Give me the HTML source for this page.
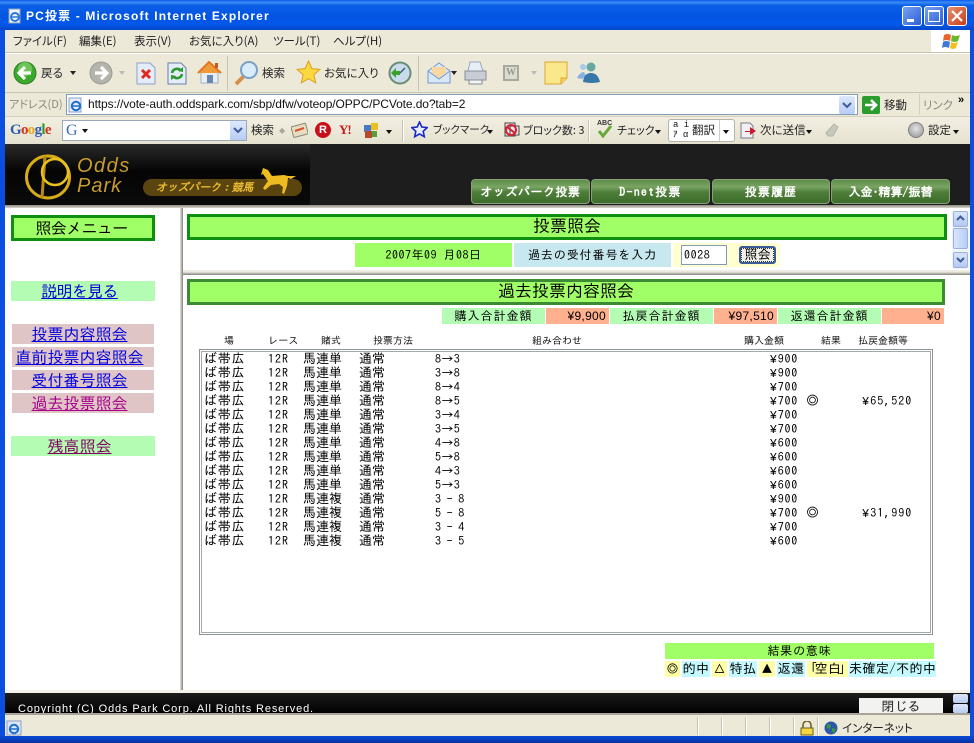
<!DOCTYPE html>
<html lang="ja"><head><meta charset="utf-8"><title>PC投票 - Microsoft Internet Explorer</title>
<style>
html,body{margin:0;padding:0;width:974px;height:743px;overflow:hidden;background:#fff}
body{position:relative;font-family:"Liberation Sans","IPAGothic",sans-serif;font-size:12px;color:#000}
.a{position:absolute;white-space:nowrap}
.t{position:absolute;white-space:nowrap;font-family:"IPAGothic","Noto Sans CJK JP",sans-serif;line-height:14px}
.u{position:absolute;white-space:nowrap;font-family:"Noto Sans CJK JP",sans-serif;font-feature-settings:"palt";font-size:11.5px;line-height:14px;color:#222}
.c{text-align:center}
.r{text-align:right}
i{font-style:normal;font-family:"Liberation Mono",monospace;line-height:0}
.bar{position:absolute;left:5px;width:965px}
.tab{position:absolute;top:179px;height:25px;border-radius:4px;border:1px solid #8aa078;box-sizing:border-box;background:linear-gradient(#5d8d4a 0,#7aa463 30%,#4f7f3a 52%,#3d6c2c 100%);color:#fff;font:bold 12px/25px "IPAGothic","Noto Sans CJK JP",sans-serif;text-align:center;white-space:nowrap}
.hb{position:absolute;box-sizing:border-box;background:#a0ff66;border:3px solid #0f8f0f;text-align:center;font-family:"IPAGothic","Noto Sans CJK JP",sans-serif;font-size:17px;line-height:20px}
.nav{position:absolute;box-sizing:border-box;height:20px;padding-right:7px;text-align:center;font-family:"IPAGothic","Noto Sans CJK JP",sans-serif;font-size:16px;line-height:20px;text-decoration:underline;white-space:nowrap}
.cell{position:absolute;top:308px;height:16px;font-family:"IPAGothic","Noto Sans CJK JP",sans-serif;font-size:12px;line-height:16px;letter-spacing:1px}
.gy{background:#b4fcb4;text-align:center}
.or{background:#ffb08f;text-align:right;padding-right:3px;box-sizing:border-box;letter-spacing:.3px;font-family:"Liberation Sans",sans-serif}
.lg{position:absolute;top:661px;height:16px;font-family:"IPAGothic","Noto Sans CJK JP",sans-serif;font-size:13px;line-height:16px;text-align:center;white-space:nowrap;letter-spacing:.4px}
.yl{background:#ffffa8}.bl{background:#c4faff}
.h{font-size:10px;top:334px;color:#111}
.sep{position:absolute;width:1px;background:#c8c4b0;border-right:1px solid #fff}
.col{position:absolute;top:352px;white-space:pre;font-family:"IPAGothic","Noto Sans CJK JP",sans-serif;line-height:14px;font-size:13px}
</style></head><body>

<!-- window frame -->
<div class="a" style="left:0;top:0;width:974px;height:743px;background:#0a4fe0"></div>
<div class="a" style="left:0;top:0;width:974px;height:30px;background:linear-gradient(#0a5ae8 0,#3b8cf6 8%,#0b5fe6 18%,#0354e2 55%,#0358ea 80%,#0446c8 100%)"></div>
<svg class="a" style="left:7px;top:8px" width="16" height="16" viewBox="0 0 16 16"><rect x="2" y="1" width="11" height="14" fill="#f2f4f8" stroke="#8aa0c0"/><circle cx="8" cy="9" r="4" fill="none" stroke="#2a78d8" stroke-width="2"/><path d="M4 9h8" stroke="#2a78d8" stroke-width="1.5"/></svg>
<div class="a" style="left:26px;top:9px;color:#fff;font:bold 12px/14px 'Liberation Sans','Noto Sans CJK JP',sans-serif;letter-spacing:1.15px">PC投票 - Microsoft Internet Explorer</div>
<div class="a" style="left:902px;top:6px;width:20px;height:20px;border:1px solid #fff;border-radius:3px;box-sizing:border-box;background:linear-gradient(135deg,#7aa2f0,#2a5fd8)"><div class="a" style="left:4px;top:12px;width:7px;height:3px;background:#fff"></div></div>
<div class="a" style="left:924px;top:6px;width:20px;height:20px;border:1px solid #fff;border-radius:3px;box-sizing:border-box;background:linear-gradient(135deg,#7aa2f0,#2a5fd8)"><div class="a" style="left:3px;top:3px;width:10px;height:9px;border:1px solid #fff;border-top-width:2px"></div></div>
<div class="a" style="left:947px;top:6px;width:20px;height:20px;border:1px solid #fff;border-radius:3px;box-sizing:border-box;background:linear-gradient(135deg,#e89070,#c83c18)"><svg width="18" height="18" style="position:absolute;left:0;top:0"><path d="M4 4l10 10M14 4L4 14" stroke="#fff" stroke-width="2.2"/></svg></div>

<!-- chrome bars -->
<div class="bar" style="top:30px;height:114px;background:#ede9d8"></div>
<div class="bar" style="top:52px;height:1px;background:#c8c4b0"></div>
<div class="bar" style="top:53px;height:1px;background:#fff"></div>
<div class="bar" style="top:92px;height:1px;background:#c8c4b0"></div>
<div class="bar" style="top:116px;height:1px;background:#d4d0bc"></div>
<div class="bar" style="top:117px;height:27px;background:linear-gradient(#f2efe2,#e6e2d0)"></div>
<div class="a" style="left:931px;top:30px;width:39px;height:22px;background:#fff"></div>
<svg class="a" style="left:942px;top:32px" width="19" height="18" viewBox="0 0 19 18"><path d="M2 3q3-2 7 0l-1 6q-4-2-7 0z" fill="#e8642c"/><path d="M10 3q4 2 8 0l-2 6q-3 2-7 0z" fill="#6cb82c"/><path d="M1 10q3-2 7 0l-1 6q-4-2-7 0z" fill="#3c78d8"/><path d="M9 10q3 2 7 0l-2 6q-3 2-6 0z" fill="#f4c020"/></svg>

<!-- menu -->
<div class="u" style="left:13px;top:34px">ファイル(F)</div>
<div class="u" style="left:79px;top:34px">編集(E)</div>
<div class="u" style="left:134px;top:34px">表示(V)</div>
<div class="u" style="left:189px;top:34px">お気に入り(A)</div>
<div class="u" style="left:273px;top:34px">ツール(T)</div>
<div class="u" style="left:333px;top:34px">ヘルプ(H)</div>

<!-- toolbar -->
<svg class="a" style="left:13px;top:61px" width="24" height="24" viewBox="0 0 24 24"><circle cx="12" cy="12" r="11" fill="#3ca82c" stroke="#2a8020"/><circle cx="12" cy="8" r="7" fill="#8ed878" opacity=".6"/><path d="M18 12H8M12 6l-6 6 6 6" stroke="#fff" stroke-width="3.2" fill="none"/></svg>
<div class="u" style="left:41px;top:66px">戻る</div>
<div class="a" style="left:70px;top:71px;width:0;height:0;border:3px solid transparent;border-top:4px solid #222"></div>
<svg class="a" style="left:89px;top:61px" width="24" height="24" viewBox="0 0 24 24"><circle cx="12" cy="12" r="11" fill="#b4b4ac" stroke="#9c9c94"/><path d="M6 12h10M12 6l6 6-6 6" stroke="#fff" stroke-width="3.2" fill="none"/></svg>
<div class="a" style="left:119px;top:71px;width:0;height:0;border:3px solid transparent;border-top:4px solid #bbb"></div>
<svg class="a" style="left:136px;top:62px" width="20" height="23" viewBox="0 0 20 23"><path d="M1 1h13l5 5v16H1z" fill="#e4ecfa" stroke="#8ca0c8"/><path d="M6 8l8 8M14 8l-8 8" stroke="#e0281c" stroke-width="3"/></svg>
<svg class="a" style="left:167px;top:62px" width="20" height="23" viewBox="0 0 20 23"><path d="M1 1h13l5 5v16H1z" fill="#e4ecfa" stroke="#6880a8"/><path d="M5 11a5 5 0 0 1 9-2M15 12a5 5 0 0 1-9 2" stroke="#2c9a2c" stroke-width="2.6" fill="none"/><path d="M11 9l5 1 0-5zM9 14l-5-1 0 5z" fill="#2c9a2c"/></svg>
<svg class="a" style="left:197px;top:60px" width="25" height="25" viewBox="0 0 25 25"><path d="M4 12v11h17V12z" fill="#e8eef6" stroke="#a0b0c8"/><path d="M1 13L12 2l12 11" fill="#f09a3c" stroke="#e07820" stroke-width="2"/><rect x="10" y="15" width="6" height="8" fill="#6c88b0"/><rect x="18" y="3" width="3" height="5" fill="#c05a20"/></svg>
<div class="a" style="left:227px;top:56px;width:1px;height:35px;background:#c8c4b0"></div>
<svg class="a" style="left:233px;top:60px" width="26" height="26" viewBox="0 0 26 26"><path d="M3 24l9-9" stroke="#d89048" stroke-width="4"/><circle cx="16" cy="10" r="8" fill="#d8ecfc" stroke="#7aa0c8" stroke-width="2"/></svg>
<div class="u" style="left:262px;top:66px">検索</div>
<svg class="a" style="left:296px;top:60px" width="25" height="25" viewBox="0 0 25 25"><path d="M12.5 1l3.4 7.6 8.1.8-6.1 5.4 1.8 8.1-7.2-4.2-7.2 4.2 1.8-8.1L1 9.4l8.1-.8z" fill="#fcd840" stroke="#d8a020"/></svg>
<div class="u" style="left:324px;top:66px">お気に入り</div>
<svg class="a" style="left:388px;top:61px" width="24" height="24" viewBox="0 0 24 24"><circle cx="12" cy="12" r="10.5" fill="#c8dcec" stroke="#688c78" stroke-width="2"/><path d="M12 12l5-5M12 12H7" stroke="#405878" stroke-width="1.5"/><path d="M3 12l5-5v3h4v4H8v3z" fill="#3ca02c"/></svg>
<div class="a" style="left:418px;top:56px;width:1px;height:35px;background:#c8c4b0"></div>
<svg class="a" style="left:427px;top:61px" width="24" height="24" viewBox="0 0 24 24"><path d="M1 10L12 2l11 8v12H1z" fill="#d8e8fa" stroke="#7898c8"/><path d="M5 12V6h14v6l-7 5z" fill="#f8d8a0"/><path d="M1 10l11 8 11-8" fill="none" stroke="#7898c8"/></svg>
<div class="a" style="left:451px;top:71px;width:0;height:0;border:3px solid transparent;border-top:4px solid #222"></div>
<svg class="a" style="left:463px;top:61px" width="25" height="24" viewBox="0 0 25 24"><path d="M7 1h10l3 9H5z" fill="#e8eef8" stroke="#98a8c0"/><path d="M2 10h21v9H2z" fill="#c8ccd4" stroke="#888c98"/><path d="M6 19h13v4H6z" fill="#f4f4f4" stroke="#888c98"/></svg>
<div class="a" style="left:503px;top:65px;width:16px;height:16px;box-sizing:border-box;border:2px solid #a8a89c;background:#dcdcd0;font:bold 10px/12px 'Liberation Serif',serif;text-align:center;color:#98988c">W</div>
<div class="a" style="left:531px;top:71px;width:0;height:0;border:3px solid transparent;border-top:4px solid #bbb"></div>
<svg class="a" style="left:544px;top:61px" width="24" height="24" viewBox="0 0 24 24"><path d="M1 1h22v16l-6 6H1z" fill="#fce88c" stroke="#d8a830"/><path d="M17 23v-6h6" fill="#f8d060" stroke="#d8a830"/></svg>
<svg class="a" style="left:576px;top:62px" width="25" height="22" viewBox="0 0 25 22"><circle cx="7" cy="5" r="3" fill="#a8c8ec"/><circle cx="15" cy="5" r="4.5" fill="#64a8a0"/><path d="M1 16q3-6 7-6l2 4-4 3z" fill="#88b0e0"/><path d="M7 20q1-9 8-9t9 9q-8 2-17 0z" fill="#3878a8"/></svg>

<!-- address -->
<div class="u" style="left:9px;top:97px;color:#8c8a80;font-size:11px">アドレス(D)</div>
<div class="a" style="left:66px;top:94px;width:792px;height:21px;background:#fff;border:1px solid #7f9db9;box-sizing:border-box"></div>
<svg class="a" style="left:68px;top:97px" width="16" height="16" viewBox="0 0 16 16"><rect x="1" y="1" width="12" height="14" fill="#e8eef8" stroke="#8ca0c8"/><circle cx="8" cy="9" r="4.2" fill="none" stroke="#1c70d0" stroke-width="2"/><path d="M4 9h8" stroke="#1c70d0" stroke-width="1.5"/></svg>
<div class="a" style="left:88px;top:97px;font:12px/15px 'Liberation Sans',sans-serif;color:#111;letter-spacing:-.1px">https://vote-auth.oddspark.com/sbp/dfw/voteop/OPPC/PCVote.do?tab=2</div>
<div class="a" style="left:839px;top:96px;width:16px;height:18px;background:linear-gradient(#dce8fc,#b8ccf4);border-radius:2px"><svg width="16" height="18"><path d="M4 7l4 4 4-4" stroke="#3c5c98" stroke-width="2" fill="none"/></svg></div>
<svg class="a" style="left:862px;top:96px" width="18" height="18" viewBox="0 0 18 18"><rect width="18" height="18" rx="2" fill="#2c9c2c"/><path d="M3 9h10M9 4l5 5-5 5" stroke="#fff" stroke-width="2.6" fill="none"/></svg>
<div class="u" style="left:884px;top:98px">移動</div>
<div class="a" style="left:919px;top:94px;width:1px;height:20px;background:#d4d0bc"></div>
<div class="u" style="left:923px;top:98px;color:#8c8a80">リンク</div>
<div class="a" style="left:958px;top:93px;font:bold 11px/14px 'Liberation Sans',sans-serif">»</div>

<!-- google toolbar -->
<div class="a" style="left:10px;top:120px;font:bold 15px/20px 'Liberation Serif',serif;letter-spacing:-.7px"><span style="color:#2c5cb8">G</span><span style="color:#d8301c">o</span><span style="color:#e8a818">o</span><span style="color:#2c5cb8">g</span><span style="color:#2c9a2c">l</span><span style="color:#d8301c">e</span></div>
<div class="a" style="left:62px;top:120px;width:185px;height:21px;background:#fff;border:1px solid #9aa8b8;box-sizing:border-box"></div>
<div class="a" style="left:66px;top:121px;font:16px/19px 'Liberation Serif',serif;color:#3c6cb8">G</div>
<div class="a" style="left:82px;top:129px;width:0;height:0;border:3px solid transparent;border-top:4px solid #111"></div>
<div class="a" style="left:230px;top:121px;width:16px;height:19px;background:linear-gradient(#dce8fc,#b8ccf4)"><svg width="16" height="19"><path d="M4 7l4 4 4-4" stroke="#3c5c98" stroke-width="2" fill="none"/></svg></div>
<div class="u" style="left:251px;top:123px">検索</div>
<div class="a" style="left:279px;top:126px;color:#a8a89c;font:8px/10px 'Liberation Sans',sans-serif">◆</div>
<svg class="a" style="left:291px;top:122px" width="17" height="17" viewBox="0 0 17 17"><rect x="1" y="3" width="15" height="11" rx="1" fill="#e8dcc0" stroke="#8c8878" transform="rotate(-15 8 8)"/><path d="M4 9l9-3" stroke="#d8502c" stroke-width="2"/></svg>
<div class="a" style="left:315px;top:122px;width:16px;height:16px;border-radius:50%;background:#c8101c;color:#fff;font:bold 11px/16px 'Liberation Sans',sans-serif;text-align:center">R</div>
<div class="a" style="left:339px;top:123px;font:bold 13px/14px 'Liberation Serif',serif;color:#c81818;letter-spacing:-1px">Y!</div>
<svg class="a" style="left:363px;top:122px" width="16" height="17" viewBox="0 0 16 17"><rect x="1" y="3" width="7" height="7" fill="#4878c8"/><rect x="8" y="1" width="7" height="7" fill="#e8c020"/><rect x="2" y="9" width="7" height="7" fill="#b84828"/><rect x="9" y="9" width="5" height="6" fill="#58a038"/></svg>
<div class="a" style="left:386px;top:130px;width:0;height:0;border:3px solid transparent;border-top:4px solid #111"></div>
<div class="sep" style="left:402px;top:120px;height:22px"></div>
<svg class="a" style="left:411px;top:121px" width="17" height="17" viewBox="0 0 17 17"><path d="M8.5 1l2.3 5 5.4.6-4 3.7 1.1 5.4-4.8-2.8-4.8 2.8 1.1-5.4-4-3.7 5.4-.6z" fill="#e8f0ff" stroke="#1c28c8" stroke-width="1.6"/></svg>
<div class="u" style="left:433px;top:123px;font-size:10.5px">ブックマーク</div>
<div class="a" style="left:487px;top:130px;width:0;height:0;border:3px solid transparent;border-top:4px solid #111"></div>
<svg class="a" style="left:504px;top:122px" width="16" height="16" viewBox="0 0 16 16"><rect x="1" y="1" width="10" height="13" fill="#e8e8f0" stroke="#444"/><rect x="6" y="4" width="9" height="9" fill="#e8e8f0" stroke="#444"/><circle cx="7" cy="8" r="5" fill="none" stroke="#d82030" stroke-width="2"/><path d="M3 5l8 6" stroke="#d82030" stroke-width="2"/></svg>
<div class="u" style="left:523px;top:123px;font-size:11px">ブロック数: 3</div>
<div class="sep" style="left:588px;top:120px;height:22px"></div>
<div class="a" style="left:597px;top:120px;font:bold 7px/8px 'Liberation Sans',sans-serif;color:#333">ABC</div>
<svg class="a" style="left:597px;top:124px" width="16" height="14" viewBox="0 0 16 14"><path d="M2 7l4 5 8-10" stroke="#68a838" stroke-width="3" fill="none"/></svg>
<div class="u" style="left:617px;top:123px;font-size:11px">チェック</div>
<div class="a" style="left:655px;top:130px;width:0;height:0;border:3px solid transparent;border-top:4px solid #111"></div>
<div class="a" style="left:668px;top:119px;width:67px;height:23px;background:#fff;border:1px solid #b4b4ac;border-radius:3px;box-sizing:border-box"></div>
<div class="a" style="left:719px;top:120px;width:1px;height:21px;background:#d0d0c8"></div>
<div class="a" style="left:673px;top:120px;font:9px/10px 'Liberation Mono','IPAGothic',monospace;width:18px;color:#111">a i<br>ｱ α</div>
<div class="u" style="left:692px;top:123px">翻訳</div>
<div class="a" style="left:723px;top:130px;width:0;height:0;border:3px solid transparent;border-top:4px solid #111"></div>
<svg class="a" style="left:740px;top:122px" width="18" height="17" viewBox="0 0 18 17"><path d="M1 1h9l3 3v12H1z" fill="#f0f0f4" stroke="#7c7c88"/><path d="M5 9h5V5l6 4-6 4v-3H5z" fill="#c8182c"/></svg>
<div class="u" style="left:760px;top:123px">次に送信</div>
<div class="a" style="left:806px;top:130px;width:0;height:0;border:3px solid transparent;border-top:4px solid #111"></div>
<svg class="a" style="left:824px;top:122px" width="16" height="16" viewBox="0 0 16 16"><path d="M2 11l8-9 4 3-5 9H4z" fill="#c8c8bc" stroke="#b4b4a8"/></svg>
<div class="a" style="left:908px;top:122px;width:16px;height:16px;border-radius:50%;background:radial-gradient(circle at 50% 40%,#e4e4e4,#909090);border:1px solid #808080;box-sizing:border-box"></div>
<div class="u" style="left:928px;top:123px">設定</div>
<div class="a" style="left:953px;top:130px;width:0;height:0;border:3px solid transparent;border-top:4px solid #111"></div>

<!-- page header -->
<div class="bar" style="top:144px;height:61px;background:#1d1d1d"></div>
<div class="a" style="left:5px;top:144px;width:305px;height:61px;background:linear-gradient(#2a2a2a,#050505 45%,#0a0a0a 100%)"></div>
<svg class="a" style="left:24px;top:153px" width="50" height="48" viewBox="0 0 50 48"><ellipse cx="24" cy="24" rx="21.5" ry="21" fill="none" stroke="#d8ac18" stroke-width="3"/><path d="M21 3l-3 42" stroke="#b88c10" stroke-width="3"/><ellipse cx="31" cy="19" rx="13" ry="13" fill="none" stroke="#e8c020" stroke-width="2.5"/></svg>
<div class="a" style="left:77px;top:155px;font:italic 20px/22px 'Liberation Sans',sans-serif;color:#c89c30;letter-spacing:1.5px">Odds</div>
<div class="a" style="left:77px;top:175px;font:italic 20px/22px 'Liberation Sans',sans-serif;color:#c89c30;letter-spacing:1px">Park</div>
<div class="a" style="left:143px;top:179px;width:159px;height:17px;border-radius:9px;background:#5a4510"></div>
<div class="t" style="left:156px;top:181px;font-size:11px;font-weight:bold;font-style:italic;color:#e8b830;letter-spacing:-.2px">オッズパーク：競馬</div>
<svg class="a" style="left:260px;top:166px" width="38" height="30" viewBox="0 0 38 30"><path d="M3 2l5 2 4 6 12-1 4 1 8 0-5 3-3-1-1 8-3 8-2-1 1-6-4-3-8 1-6 5-2-2 5-7-5-7-2 1z" fill="#eebc20"/></svg>

<div class="tab" style="left:471px;width:119px;letter-spacing:.5px">オッズパーク投票</div>
<div class="tab" style="left:591px;width:119px;letter-spacing:1.2px">D-net投票</div>
<div class="tab" style="left:712px;width:118px;letter-spacing:1px">投票履歴</div>
<div class="tab" style="left:831px;width:119px">入金･精算/振替</div>

<!-- frames -->
<div class="bar" style="top:205px;height:488px;background:#fff"></div>
<div class="bar" style="top:205px;height:3px;background:linear-gradient(#8c8c84,#d8d4c8)"></div>
<div class="a" style="left:180px;top:208px;width:3px;height:482px;background:linear-gradient(90deg,#e8e8e0,#808078)"></div>
<div class="a" style="left:183px;top:270px;width:787px;height:5px;background:linear-gradient(#f0efe8,#e8e6dc 40%,#80807a)"></div>
<div class="bar" style="top:690px;height:3px;background:#f4f2ea"></div>

<!-- left nav -->
<div class="hb" style="left:11px;top:215px;width:144px;height:26px;font-size:16px;line-height:20px;letter-spacing:-.6px;padding-right:3px">照会メニュー</div>
<div class="nav" style="left:11px;top:281px;width:144px;background:#b4fcb4;color:#0000d8;letter-spacing:-.7px">説明を見る</div>
<div class="nav" style="left:12px;top:324px;width:142px;background:#dfc5c5;color:#0000e0">投票内容照会</div>
<div class="nav" style="left:12px;top:347px;width:142px;background:#dfc5c5;color:#0000e0">直前投票内容照会</div>
<div class="nav" style="left:12px;top:370px;width:142px;background:#dfc5c5;color:#0000e0">受付番号照会</div>
<div class="nav" style="left:12px;top:393px;width:142px;background:#dfc5c5;color:#a8008c">過去投票照会</div>
<div class="nav" style="left:11px;top:436px;width:144px;background:#b4fcb4;color:#800060">残高照会</div>

<!-- top frame -->
<div class="hb" style="left:187px;top:214px;width:760px;height:26px">投票照会</div>
<div class="t c" style="left:355px;top:243px;width:157px;height:24px;background:#a0ff66;font-size:12px;line-height:24px;letter-spacing:.5px">2007年09 月08日</div>
<div class="t c" style="left:514px;top:243px;width:157px;height:24px;background:#c8e8f0;font-size:12px;line-height:24px;letter-spacing:.9px">過去の受付番号を入力</div>
<div class="a" style="left:673px;top:243px;width:107px;height:24px;background:#ffffd0"></div>
<div class="t" style="left:681px;top:245px;width:46px;height:20px;background:#fff;border:1px solid #7f9db9;box-sizing:border-box;font-size:12px;line-height:18px;padding-left:2px;letter-spacing:.6px">0028</div>
<div class="t c" style="left:739px;top:246px;width:37px;height:18px;box-sizing:border-box;border:2px solid #3c5c98;border-radius:3px;background:#f0f0e8;font-size:13px;line-height:14px;outline:1px dotted #333;outline-offset:-3px">照会</div>
<div class="a" style="left:952px;top:211px;width:17px;height:58px;background:#eef3fc"></div>
<div class="a" style="left:953px;top:211px;width:15px;height:16px;background:linear-gradient(#d8e6fc,#b4c8f4);border:1px solid #9cb0d8;box-sizing:border-box;border-radius:2px"><svg width="13" height="14"><path d="M3 8l3.5-3.5L10 8" stroke="#3c5c98" stroke-width="2" fill="none"/></svg></div>
<div class="a" style="left:953px;top:228px;width:15px;height:21px;background:linear-gradient(90deg,#d8e6fc,#b8ccf8);border:1px solid #9cb0d8;box-sizing:border-box;border-radius:2px"></div>
<div class="a" style="left:953px;top:252px;width:15px;height:16px;background:linear-gradient(#d8e6fc,#b4c8f4);border:1px solid #9cb0d8;box-sizing:border-box;border-radius:2px"><svg width="13" height="14"><path d="M3 5l3.5 3.5L10 5" stroke="#3c5c98" stroke-width="2" fill="none"/></svg></div>

<!-- main -->
<div class="hb" style="left:187px;top:279px;width:758px;height:26px;border-color:#3c8a34">過去投票内容照会</div>
<div class="cell gy" style="left:442px;width:103px">購入合計金額</div>
<div class="cell or" style="left:546px;width:63px">¥9,900</div>
<div class="cell gy" style="left:610px;width:103px">払戻合計金額</div>
<div class="cell or" style="left:714px;width:63px">¥97,510</div>
<div class="cell gy" style="left:778px;width:103px">返還合計金額</div>
<div class="cell or" style="left:882px;width:62px">¥0</div>

<div class="t h" style="left:224px">場</div>
<div class="t h" style="left:268px;letter-spacing:.2px">レース</div>
<div class="t h" style="left:321px">賭式</div>
<div class="t h" style="left:373px">投票方法</div>
<div class="t h" style="left:532px">組み合わせ</div>
<div class="t h" style="left:744px">購入金額</div>
<div class="t h" style="left:821px">結果</div>
<div class="t h" style="left:858px">払戻金額等</div>

<div class="a" style="left:199px;top:349px;width:734px;height:286px;box-sizing:border-box;border:1px solid #8c9498;box-shadow:inset 0 0 0 1px #fff,inset 0 0 0 2px #a4a8a8"></div>

<div class="col" style="left:204px;letter-spacing:.8px">ば帯広
ば帯広
ば帯広
ば帯広
ば帯広
ば帯広
ば帯広
ば帯広
ば帯広
ば帯広
ば帯広
ば帯広
ば帯広
ば帯広</div>
<div class="col" style="left:268px;font-size:12px;letter-spacing:1px">12R
12R
12R
12R
12R
12R
12R
12R
12R
12R
12R
12R
12R
12R</div>
<div class="col" style="left:303px">馬連単
馬連単
馬連単
馬連単
馬連単
馬連単
馬連単
馬連単
馬連単
馬連単
馬連複
馬連複
馬連複
馬連複</div>
<div class="col" style="left:359px">通常
通常
通常
通常
通常
通常
通常
通常
通常
通常
通常
通常
通常
通常</div>
<div class="col" style="left:435px;font-size:12px;letter-spacing:.4px;word-spacing:-1.2px">8→3
3→8
8→4
8→5
3→4
3→5
4→8
5→8
4→3
5→3
3 - 8
5 - 8
3 - 4
3 - 5</div>
<div class="col r" style="left:740px;width:58px;font-size:12px;letter-spacing:.75px"><i>¥</i>900
<i>¥</i>900
<i>¥</i>700
<i>¥</i>700
<i>¥</i>700
<i>¥</i>700
<i>¥</i>600
<i>¥</i>600
<i>¥</i>600
<i>¥</i>600
<i>¥</i>900
<i>¥</i>700
<i>¥</i>700
<i>¥</i>600</div>
<div class="t" style="left:806px;top:394px;font-size:13px">◎</div>
<div class="t" style="left:806px;top:506px;font-size:13px">◎</div>
<div class="t" style="left:862px;top:394px;font-size:12px;letter-spacing:1px"><i>¥</i>65,520</div>
<div class="t" style="left:862px;top:506px;font-size:12px;letter-spacing:1px"><i>¥</i>31,990</div>

<!-- legend -->
<div class="t c" style="left:665px;top:643px;width:269px;height:16px;background:#a0ff66;font-size:12px;line-height:16px;letter-spacing:.8px">結果の意味</div>
<div class="lg yl" style="left:665px;width:15px;font-size:12px;letter-spacing:0">◎</div>
<div class="lg bl" style="left:682px;width:28px">的中</div>
<div class="lg yl" style="left:712px;width:15px;font-size:12px;letter-spacing:0">△</div>
<div class="lg bl" style="left:729px;width:28px">特払</div>
<div class="lg yl" style="left:759px;width:16px;font-size:12px;letter-spacing:0">▲</div>
<div class="lg bl" style="left:777px;width:28px">返還</div>
<div class="lg yl" style="left:807px;width:41px"><span style="margin:0 -3px 0 -4px">「</span>空白<span style="margin:0 -5px 0 -3px">」</span></div>
<div class="lg bl" style="left:849px;width:87px">未確定/不的中</div>

<!-- footer -->
<div class="bar" style="top:693px;height:20px;background:linear-gradient(#1c1c1c,#000);overflow:hidden"><div class="a" style="left:13px;top:9px;color:#fff;font:11px/14px 'Liberation Sans',sans-serif;letter-spacing:.87px">Copyright (C) Odds Park Corp. All Rights Reserved.</div></div>
<div class="t c" style="left:859px;top:698px;width:84px;height:15px;background:#f2f2f0;font-size:13px;line-height:17px;overflow:hidden;color:#222">閉じる</div>
<div class="a" style="left:953px;top:694px;width:15px;height:9px;background:linear-gradient(#dce8fa,#b8ccf0);border-radius:2px"></div>
<div class="a" style="left:953px;top:704px;width:15px;height:9px;background:linear-gradient(#dce8fa,#b8ccf0);border-radius:2px"></div>

<!-- status -->
<div class="bar" style="top:713px;height:2px;background:#a8a498"></div>
<div class="bar" style="top:715px;height:21px;background:#ece9d8"></div>
<svg class="a" style="left:6px;top:720px" width="16" height="16" viewBox="0 0 16 16"><rect x="1" y="1" width="14" height="14" fill="#dce4f4" stroke="#8ca0c8"/><circle cx="8" cy="9" r="4.2" fill="none" stroke="#1c70d0" stroke-width="2"/><path d="M4 9h8" stroke="#1c70d0" stroke-width="1.5"/></svg>
<div class="sep" style="left:697px;top:717px;height:18px"></div>
<div class="sep" style="left:721px;top:717px;height:18px"></div>
<div class="sep" style="left:745px;top:717px;height:18px"></div>
<div class="sep" style="left:769px;top:717px;height:18px"></div>
<div class="sep" style="left:793px;top:717px;height:18px"></div>
<div class="sep" style="left:817px;top:717px;height:18px"></div>
<svg class="a" style="left:800px;top:721px" width="14" height="15" viewBox="0 0 14 15"><path d="M3 7V4a4 4 0 0 1 8 0v3" fill="none" stroke="#706020" stroke-width="1.6"/><rect x="1" y="7" width="12" height="7" fill="#f4d840" stroke="#706020"/></svg>
<svg class="a" style="left:824px;top:721px" width="14" height="14" viewBox="0 0 14 14"><circle cx="7" cy="7" r="6.5" fill="#2c58a8"/><path d="M3 3l4 1-1 4-3-1zM8 7l4 1-2 4-2-1z" fill="#3c9838"/></svg>
<div class="u" style="left:842px;top:721px">インターネット</div>
<div class="a" style="left:0;top:736px;width:974px;height:7px;background:linear-gradient(#0a4ad8,#0830a0)"></div>

</body></html>
